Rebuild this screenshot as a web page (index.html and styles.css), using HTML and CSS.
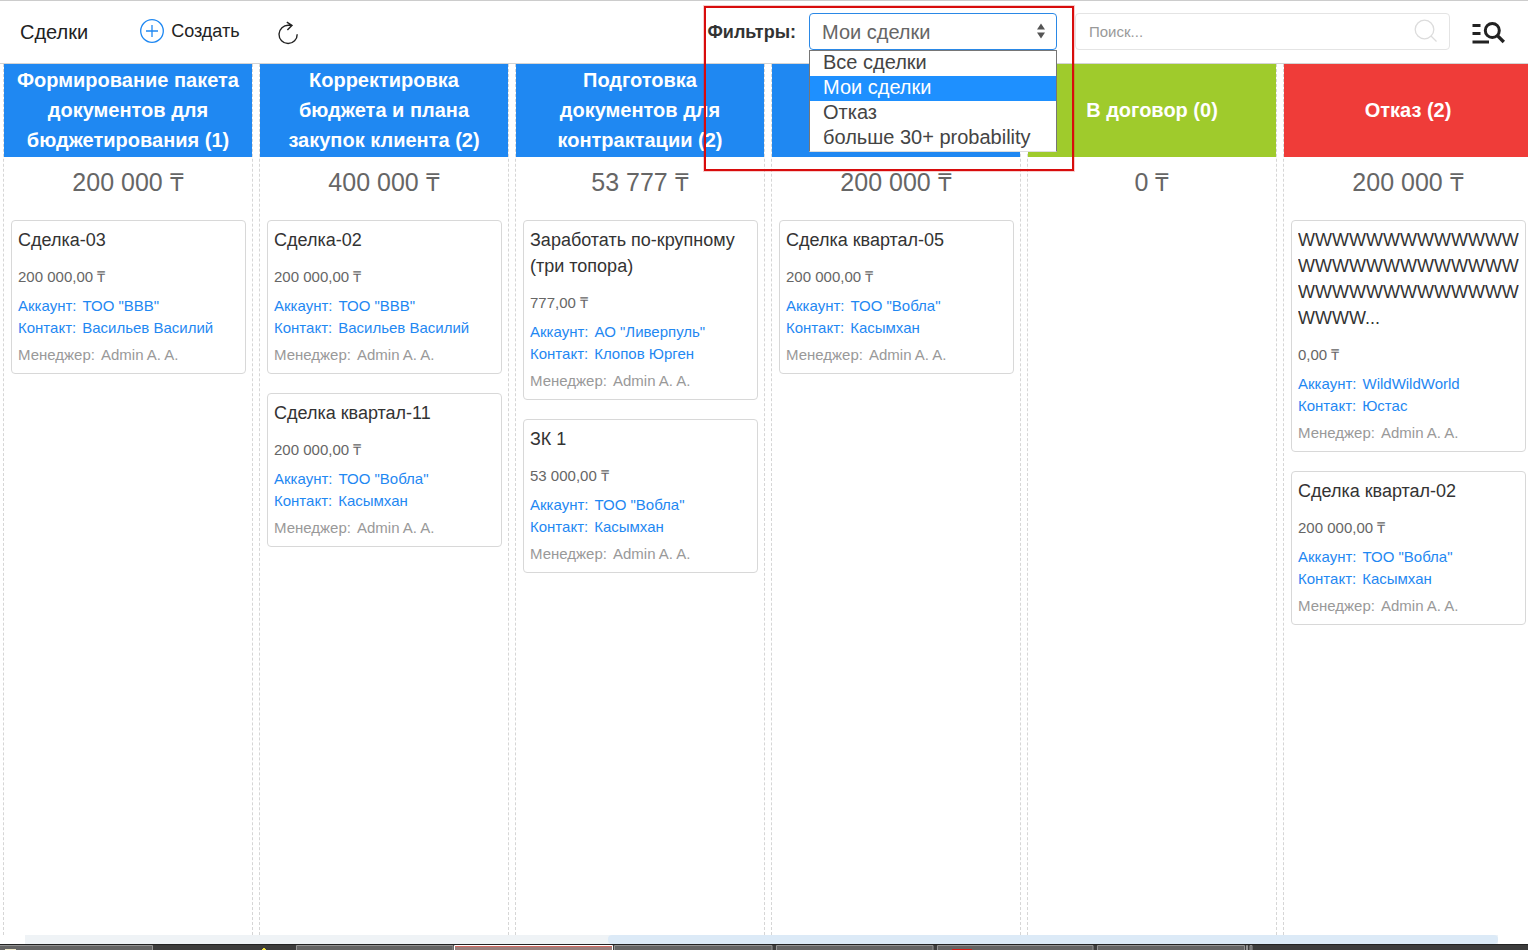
FILE: index.html
```html
<!DOCTYPE html>
<html lang="ru">
<head>
<meta charset="utf-8">
<title>Сделки</title>
<link rel="stylesheet" href="styles.css">
</head>
<body>
<header class="toolbar">
  <h1 class="page-title">Сделки</h1>
  <button class="create" type="button">
    <svg width="24" height="24" viewBox="0 0 24 24" fill="none" stroke="#1f88f2"><circle cx="12" cy="12" r="11.3" stroke-width="1.3"/><path d="M12 6v12M6 12h12" stroke-width="1.3"/></svg>
    <span>Создать</span>
  </button>
  <button class="refresh" type="button" aria-label="Обновить">
    <svg width="22" height="24" viewBox="0 0 22 24" fill="none" stroke="#222" stroke-width="1.4"><path d="M20.2 13.2A9.1 9.1 0 1 1 11.6 4.3H15M9.8 1.2L15 4.3L10.4 9"/></svg>
  </button>
  <div class="filters">
    <label class="filters-label" for="filter">Фильтры:</label>
    <div class="filter-box">
      <select class="filter-select" id="filter">
        <option>Все сделки</option>
        <option selected>Мои сделки</option>
        <option>Отказ</option>
        <option>больше 30+ probability</option>
      </select>
      <svg class="filter-arrows" width="8" height="16" viewBox="0 0 8 16" fill="#555"><path d="M4 .5L8 6.500H0zM4 15.500L0 9.500H8z"/></svg>
      <ul class="filter-menu" role="listbox" aria-label="Фильтры">
        <li role="option">Все сделки</li>
        <li class="active" role="option" aria-selected="true">Мои сделки</li>
        <li role="option">Отказ</li>
        <li role="option">больше 30+ probability</li>
      </ul>
    </div>
    <div class="highlight"></div>
  </div>
  <div class="search">
    <input class="search-input" type="text" placeholder="Поиск..." aria-label="Поиск">
    <svg width="24" height="24" viewBox="0 0 24 24" fill="none" stroke="#dcdcdc" stroke-width="1.3"><circle cx="10.500" cy="10.500" r="9.300"/><path d="M17 17l5.500 5.500"/></svg>
  </div>
  <button class="advanced" type="button" aria-label="Расширенный поиск">
    <svg width="33" height="24" viewBox="0 0 33 24" fill="none" stroke="#222" stroke-width="2.800"><path d="M.5 4.500h8M.5 12.500h8M.5 21h16.500"/><circle cx="20.300" cy="9.500" r="7" stroke-width="3"/><path d="M25.200 14.400l6.600 6.600" stroke-width="3.400"/></svg>
  </button>
</header>

<main class="board">
  <section class="column">
    <h2 class="stage blue">Формирование пакета документов для бюджетирования (1)</h2>
    <p class="total">200 000 ₸</p>
    <article class="card">
      <h3 class="name">Сделка-03</h3>
      <p class="price">200 000,00 ₸</p>
      <a class="link" href="#"><span>Аккаунт:</span><span>ТОО "ВВВ"</span></a>
      <a class="link" href="#"><span>Контакт:</span><span>Васильев Василий</span></a>
      <p class="manager"><span>Менеджер:</span><span>Admin A. A.</span></p>
    </article>
  </section>

  <section class="column">
    <h2 class="stage blue">Корректировка бюджета и плана закупок клиента (2)</h2>
    <p class="total">400 000 ₸</p>
    <article class="card">
      <h3 class="name">Сделка-02</h3>
      <p class="price">200 000,00 ₸</p>
      <a class="link" href="#"><span>Аккаунт:</span><span>ТОО "ВВВ"</span></a>
      <a class="link" href="#"><span>Контакт:</span><span>Васильев Василий</span></a>
      <p class="manager"><span>Менеджер:</span><span>Admin A. A.</span></p>
    </article>
    <article class="card">
      <h3 class="name">Сделка квартал-11</h3>
      <p class="price">200 000,00 ₸</p>
      <a class="link" href="#"><span>Аккаунт:</span><span>ТОО "Вобла"</span></a>
      <a class="link" href="#"><span>Контакт:</span><span>Касымхан</span></a>
      <p class="manager"><span>Менеджер:</span><span>Admin A. A.</span></p>
    </article>
  </section>

  <section class="column">
    <h2 class="stage blue">Подготовка документов для контрактации (2)</h2>
    <p class="total">53 777 ₸</p>
    <article class="card">
      <h3 class="name">Заработать по-крупному (три топора)</h3>
      <p class="price">777,00 ₸</p>
      <a class="link" href="#"><span>Аккаунт:</span><span>АО "Ливерпуль"</span></a>
      <a class="link" href="#"><span>Контакт:</span><span>Клопов Юрген</span></a>
      <p class="manager"><span>Менеджер:</span><span>Admin A. A.</span></p>
    </article>
    <article class="card">
      <h3 class="name">ЗК 1</h3>
      <p class="price">53 000,00 ₸</p>
      <a class="link" href="#"><span>Аккаунт:</span><span>ТОО "Вобла"</span></a>
      <a class="link" href="#"><span>Контакт:</span><span>Касымхан</span></a>
      <p class="manager"><span>Менеджер:</span><span>Admin A. A.</span></p>
    </article>
  </section>

  <section class="column">
    <h2 class="stage blue"></h2>
    <p class="total">200 000 ₸</p>
    <article class="card">
      <h3 class="name">Сделка квартал-05</h3>
      <p class="price">200 000,00 ₸</p>
      <a class="link" href="#"><span>Аккаунт:</span><span>ТОО "Вобла"</span></a>
      <a class="link" href="#"><span>Контакт:</span><span>Касымхан</span></a>
      <p class="manager"><span>Менеджер:</span><span>Admin A. A.</span></p>
    </article>
  </section>

  <section class="column">
    <h2 class="stage green">В договор (0)</h2>
    <p class="total">0 ₸</p>
  </section>

  <section class="column">
    <h2 class="stage red">Отказ (2)</h2>
    <p class="total">200 000 ₸</p>
    <article class="card">
      <h3 class="name">WWWWWWWWWWWWW WWWWWWWWWWWWW WWWWWWWWWWWWW WWWW...</h3>
      <p class="price">0,00 ₸</p>
      <a class="link" href="#"><span>Аккаунт:</span><span>WildWildWorld</span></a>
      <a class="link" href="#"><span>Контакт:</span><span>Юстас</span></a>
      <p class="manager"><span>Менеджер:</span><span>Admin A. A.</span></p>
    </article>
    <article class="card">
      <h3 class="name">Сделка квартал-02</h3>
      <p class="price">200 000,00 ₸</p>
      <a class="link" href="#"><span>Аккаунт:</span><span>ТОО "Вобла"</span></a>
      <a class="link" href="#"><span>Контакт:</span><span>Касымхан</span></a>
      <p class="manager"><span>Менеджер:</span><span>Admin A. A.</span></p>
    </article>
  </section>
</main>

<div class="scrollbar"><div class="thumb"></div></div>
<footer class="taskbar">
  <svg width="1528" height="6" viewBox="0 0 1528 6">
    <g fill="#646464" stroke="#939393">
      <path d="M-2 .5H152.500V9H-2zM296.500 .5H453V9H296.500zM614.500 .5H772V9H614.500zM776.500 .5H933V9H776.500zM937.500 .5H1093V9H937.500zM1097.500 .5H1244.500V9H1097.500zM1246.500 .5h1V9h-1zM1250 .5h2V9h-2z"/>
    </g>
    <path d="M454.500 .5H612.500V9H454.500z" fill="#997f7c" stroke="#fff"/>
    <path d="M455 1.500H612" stroke="#cf6a64"/>
    <path d="M5 4.500h11" stroke="#eee8c8"/>
    <path d="M262 4.500h4M263 3.500h2" stroke="#f5e33c"/>
    <path d="M952 4.500h20" stroke="#d91c14"/>
  </svg>
</footer>
</body>
</html>
```
FILE: styles.css
```css
* { box-sizing: border-box; }

body {
  margin: 0;
  height: 100vh;
  display: flex;
  flex-direction: column;
  overflow: hidden;
  background: #fff;
  color: #333;
  font-family: "Liberation Sans", Arial, sans-serif;
  font-size: 15px;
}

h1, h2, h3, p, ul { margin: 0; padding: 0; font-weight: normal; }
svg { display: block; flex: none; }
a { text-decoration: none; }
button { border: 0; padding: 0; background: none; font: inherit; color: #222; }

.toolbar {
  flex: none;
  display: flex;
  align-items: center;
  height: 64px;
  padding: 0 23px 2px 20px;
  border-top: 1px solid #ccc;
  border-bottom: 1px solid #d4d4d4;
}
.page-title { padding-top: 2px; font-size: 20px; color: #222; margin-right: 52px; }
.create { display: flex; align-items: center; gap: 7px; font-size: 18px; margin-right: 37px; }
.create span { padding-top: 1px; }
.refresh { padding-top: 3px; }

.filters {
  position: relative;
  display: flex;
  align-items: center;
  gap: 13px;
  margin-left: auto;
}
.filters-label { padding-top: 2px; font-size: 18px; font-weight: bold; }
.filter-box { position: relative; width: 248px; }
.filter-select {
  display: block;
  appearance: none;
  width: 100%;
  height: 37px;
  padding: 2px 12px 0;
  border: 1px solid #2a88e6;
  border-radius: 4px;
  background: #fff;
  color: #666;
  font: 20px "Liberation Sans", Arial, sans-serif;
}
.filter-arrows { position: absolute; right: 12px; top: 10px; }
.filter-menu {
  position: absolute;
  z-index: 2;
  top: 37px;
  left: 0;
  width: 100%;
  list-style: none;
  background: #fff;
  border: 1px solid #767676;
  border-bottom-color: #ddd;
  font-size: 20px;
  line-height: 23px;
  color: #444;
}
.filter-menu li { padding: 0 0 2px 13px; }
.filter-menu .active { background: #1e90ff; color: #fff; }
.highlight {
  position: absolute;
  z-index: 3;
  inset: -7px -17px -121px -3px;
  border: 2px solid #d80c0c;
  box-shadow: 0 0 0 1px rgba(216, 12, 12, 0.2);
  pointer-events: none;
}

.search {
  flex: 0 1 375px;
  display: flex;
  align-items: center;
  height: 37px;
  margin: 0 22px 0 18px;
  padding: 0 11px 0 13px;
  border: 1px solid #e4e4e4;
  border-radius: 4px;
}
.search-input { flex: 1; min-width: 0; border: 0; padding: 0; background: none; font: inherit; }
.search-input::placeholder { color: #999; }
.advanced { padding-top: 3px; }

.board {
  flex: 1;
  min-height: 0;
  display: flex;
  gap: 6px;
  padding-left: 3px;
  overflow: hidden;
}
.column {
  flex: 0 0 250px;
  border: 1px dashed #d6d6d6;
  border-width: 0 1px;
}
.stage {
  display: flex;
  align-items: center;
  justify-content: center;
  min-height: 93px;
  padding: 1px 8px 2px;
  color: #fff;
  font-size: 20px;
  font-weight: bold;
  line-height: 30px;
  text-align: center;
}
.blue { background: #1f88f2; }
.green { background: #9fcb2c; }
.red { background: #ef3c39; }
.total {
  padding-bottom: 13px;
  color: #666;
  font-size: 25px;
  line-height: 50px;
  text-align: center;
}

.card {
  width: 235px;
  margin: 0 0 19px 7px;
  padding: 6px;
  border: 1px solid #d8d8d8;
  border-radius: 4px;
}
.name { overflow: hidden; font-size: 18px; line-height: 26px; }
.price { margin-top: 12px; color: #666; line-height: 24px; }
.link { display: flex; gap: 6px; color: #1f88f2; line-height: 22px; }
.price + .link { margin-top: 6px; }
.manager { display: flex; gap: 6px; margin-top: 4px; color: #999; line-height: 24px; }

.scrollbar {
  flex: none;
  height: 9px;
  margin: 0 30px 0 25px;
  background: #eff3f6;
}
.thumb {
  width: 60.4%;
  height: 9px;
  margin-left: auto;
  border-radius: 4px;
  background: #dceaf7;
}
.taskbar {
  flex: none;
  height: 6px;
  overflow: hidden;
  background: #3c3c3c;
  border-top: 1px solid #222;
}
```
